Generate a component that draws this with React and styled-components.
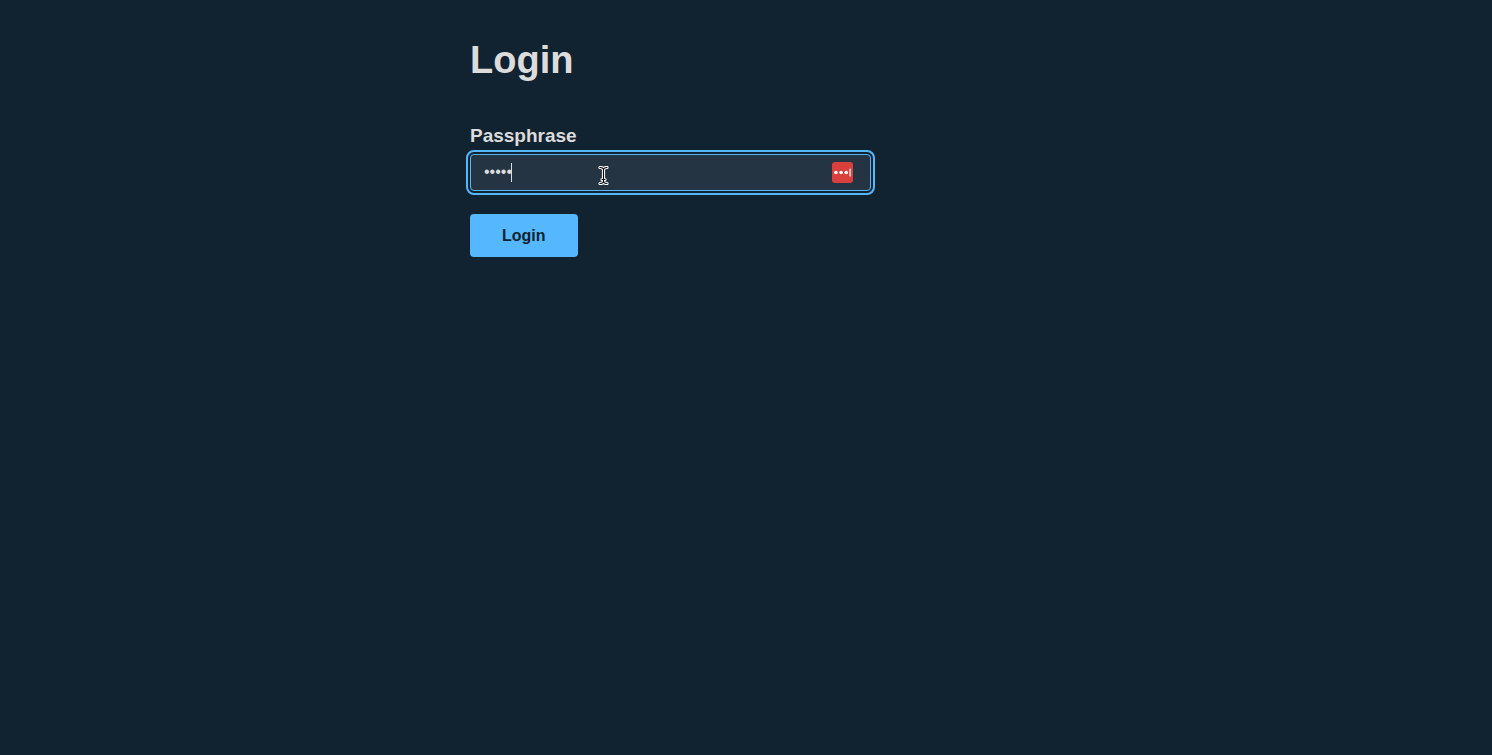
import React from 'react';
import styled, { createGlobalStyle } from 'styled-components';

const GlobalStyle = createGlobalStyle`
    * {
        box-sizing: border-box;
    }

    body {
        margin: 0;
        background: #112231;
        color: #dcdcdc;
        font-family: "Liberation Sans", Arial, Helvetica, sans-serif;
        font-size: 16px;
    }
`

const Page = styled.main`
    max-width: 552px;
    margin: 0 auto;
    padding-top: 36px;
`

const Title = styled.h1`
    margin: 0 0 40px;
    font-size: 38px;
    line-height: 48px;
`

const Form = styled.form`
    display: flex;
    flex-direction: column;
    align-items: flex-start;
`

const Label = styled.label`
    margin-bottom: 6px;
    font-size: 19px;
    font-weight: bold;
    line-height: 24px;
`

const Field = styled.div`
    position: relative;
    display: flex;
    width: 100%;
    max-width: 401px;
    margin-bottom: 23px;
`

const Input = styled.input`
    flex: 1;
    height: 37px;
    padding: 0 48px 2px 13px;
    border: 1px solid #55b8ff;
    border-radius: 4px;
    outline: 2px solid #55b8ff;
    outline-offset: 2px;
    background: #243443;
    color: #dcdcdc;
    caret-color: transparent;
    font: inherit;
`

const Caret = styled.span`
    position: absolute;
    top: 9px;
    left: 41px;
    width: 1px;
    height: 19px;
    background: #dcdcdc;
`

const Pointer = styled.svg`
    position: absolute;
    top: 12px;
    left: 128px;
    pointer-events: none;
`

const ManagerButton = styled.button`
    position: absolute;
    top: 8px;
    right: 18px;
    width: 21px;
    height: 21px;
    padding: 0;
    border: 0;
    border-radius: 3px;
    background: #d93f3c;

    svg {
        display: block;
    }
`

const Submit = styled.button`
    height: 43px;
    padding: 0 32px;
    border: 0;
    border-radius: 4px;
    background: #55b8ff;
    color: #112231;
    font: inherit;
    font-weight: bold;
`

const BEAM = 'M2 1.5C4 1.5 5.5 2 5.5 4V15C5.5 17 4 17.5 2 17.5M9 1.5C7 1.5 5.5 2 5.5 4M5.5 15C5.5 17 7 17.5 9 17.5M4 13.5H7';

const App = () => {

    const [passphrase, setPassphrase] = React.useState('hello');

    return (
        <Page>
            <GlobalStyle />
            <Title>Login</Title>
            <Form onSubmit={e => e.preventDefault()}>
                <Label htmlFor='passphrase'>Passphrase</Label>
                <Field>
                    <Input
                        id='passphrase'
                        type='password'
                        value={passphrase}
                        onChange={e => setPassphrase(e.target.value)}
                    />
                    <Caret />
                    <Pointer width='11' height='19' viewBox='0 0 11 19' fill='none' strokeLinecap='round'>
                        <path d={BEAM} stroke='#fff' strokeWidth='3.2' />
                        <path d={BEAM} stroke='#000' strokeWidth='1.1' />
                    </Pointer>
                    <ManagerButton type='button' aria-label='Fill passphrase'>
                        <svg width='21' height='21' viewBox='0 0 21 21' fill='#fff'>
                            <circle cx='3.9' cy='10.5' r='1.8' />
                            <circle cx='9.1' cy='10.5' r='1.8' />
                            <circle cx='14.2' cy='10.5' r='1.8' />
                            <rect x='17.5' y='6.5' width='1.2' height='8' rx='0.5' />
                        </svg>
                    </ManagerButton>
                </Field>
                <Submit type='submit'>Login</Submit>
            </Form>
        </Page>
    )
}

export default App;
